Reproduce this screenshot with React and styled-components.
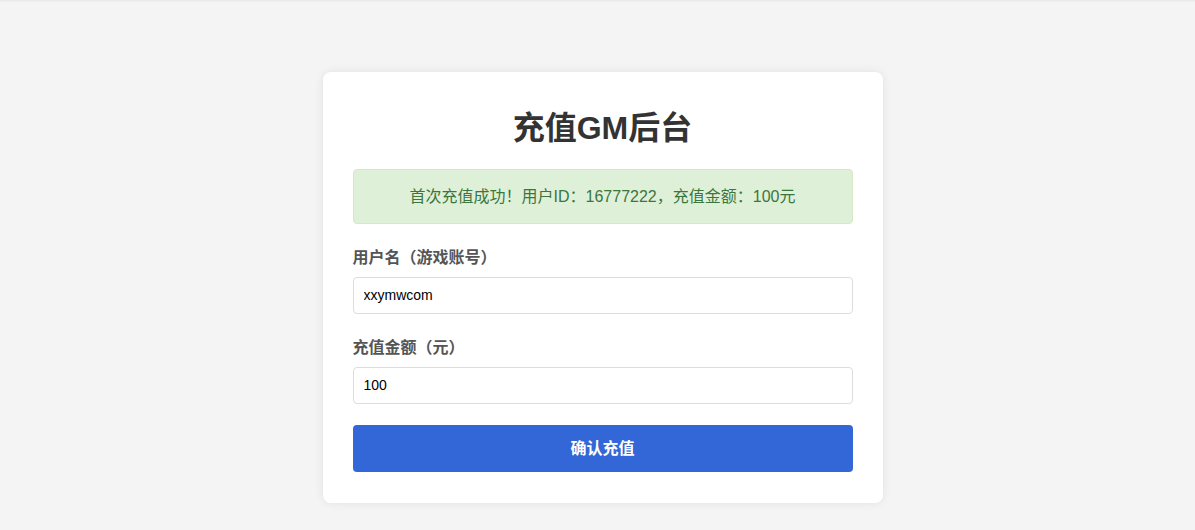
import React, { useState } from "react";
import styled, { createGlobalStyle } from "styled-components";

const GlobalStyle = createGlobalStyle`
  html, body {
    margin: 0;
    padding: 0;
    background: #f4f4f4;
  }
  body {
    font-family: "Liberation Sans", Arial, "Noto Sans CJK SC", sans-serif;
    color: #333;
  }
  * { box-sizing: border-box; }
`;

const TopEdge = styled.div`
  height: 2px;
  background: #ebebeb;
  border-bottom: 1px solid #efefef;
`;

const Page = styled.div`
  padding: 70px 10px 26px 20px;
`;

const Card = styled.div`
  width: 560px;
  margin: 0 auto;
  background: #fff;
  padding: 30px 30px 31px;
  border-radius: 8px;
  box-shadow: 0 0 10px rgba(0, 0, 0, 0.08);
`;

const Title = styled.h1`
  margin: 8px 0 23px;
  text-align: center;
  font-size: 32px;
  line-height: 36px;
  font-weight: bold;
  color: #333;
`;

const Alert = styled.div`
  padding: 15px;
  border: 1px solid #d6e9c6;
  background: #dff0d8;
  color: #3c763d;
  border-radius: 4px;
  font-size: 16px;
  line-height: 23px;
  text-align: center;
  margin-bottom: 23px;
`;

const Group = styled.div`
  margin-bottom: ${(p) => p.$gap}px;
`;

const Label = styled.label`
  display: block;
  font-size: 16px;
  line-height: 22px;
  font-weight: bold;
  color: #555;
  margin-bottom: 8px;
`;

const Input = styled.input`
  display: block;
  width: 100%;
  padding: 10px;
  font-family: "Liberation Sans", Arial, sans-serif;
  font-size: 14px;
  line-height: 15px;
  color: #000;
  border: 1px solid #ddd;
  border-radius: 4px;
  outline: none;
  background: #fff;
`;

const Button = styled.button`
  display: block;
  width: 100%;
  padding: 12px;
  border: none;
  border-radius: 4px;
  background: #3366d6;
  color: #fff;
  font-family: "Liberation Sans", Arial, "Noto Sans CJK SC", sans-serif;
  font-size: 16px;
  line-height: 23px;
  font-weight: bold;
  cursor: pointer;
`;

export default function App() {
  const [user, setUser] = useState("xxymwcom");
  const [amount, setAmount] = useState("100");
  return (
    <>
      <GlobalStyle />
      <TopEdge />
      <Page>
        <Card>
          <Title>充值GM后台</Title>
          <Alert>首次充值成功！用户ID：16777222，充值金额：100元</Alert>
          <Group $gap={23}>
            <Label>用户名（游戏账号）</Label>
            <Input value={user} onChange={(e) => setUser(e.target.value)} />
          </Group>
          <Group $gap={21}>
            <Label>充值金额（元）</Label>
            <Input value={amount} onChange={(e) => setAmount(e.target.value)} />
          </Group>
          <Button>确认充值</Button>
        </Card>
      </Page>
    </>
  );
}
